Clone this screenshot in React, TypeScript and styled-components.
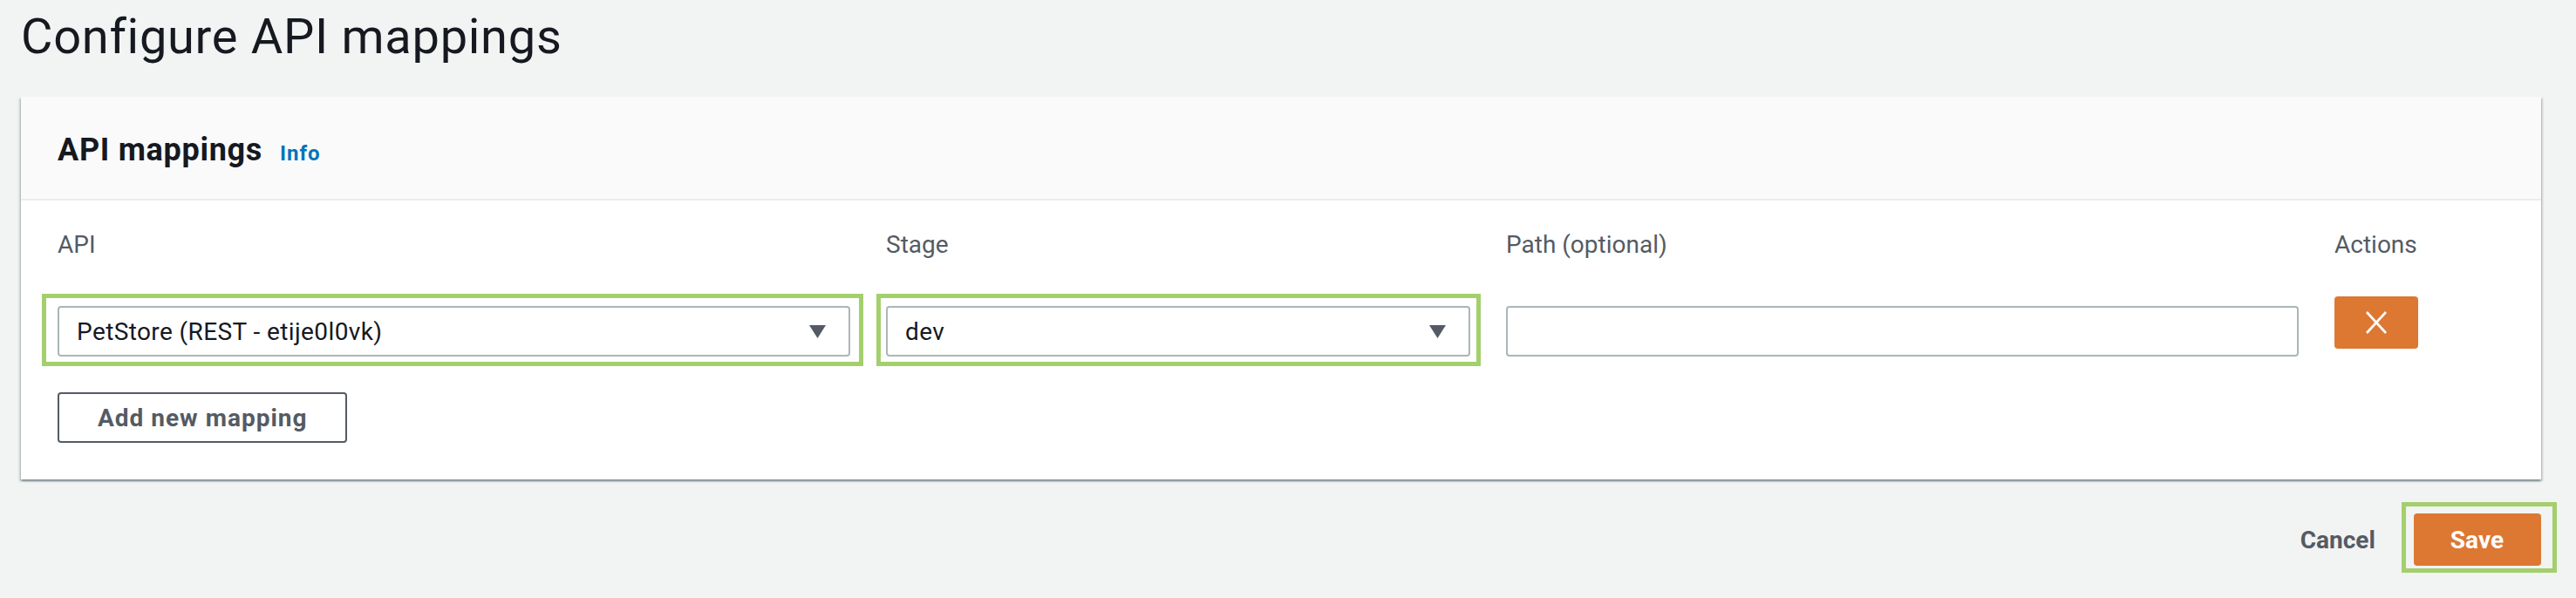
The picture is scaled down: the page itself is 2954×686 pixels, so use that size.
import { FC, ReactNode } from "react"
import styled, { createGlobalStyle } from "styled-components"

const GlobalStyle = createGlobalStyle`
  body {
    margin: 0;
    background: #f2f3f3;
    font-family: Roboto, "Liberation Sans", sans-serif;
    color: #16191f;
  }
  * {
    box-sizing: border-box;
  }
`

const StyledPage = styled.div`
  min-height: 686px;
  padding: 9px 40px 0 24px;
`

const StyledTitle = styled.h1`
  margin: 0 0 35px;
  font-size: 56px;
  line-height: 67px;
  font-weight: 400;
  letter-spacing: 0.7px;
  color: #16191f;
`

const StyledPanel = styled.section`
  background: #fff;
  box-shadow: 0 2px 2px 0 rgba(0, 28, 36, 0.3), 2px 2px 2px 0 rgba(0, 28, 36, 0.15),
    -2px 2px 2px 0 rgba(0, 28, 36, 0.15);
`

const StyledPanelHeader = styled.header`
  display: flex;
  align-items: baseline;
  gap: 20px;
  padding: 39px 42px 34px;
  background: #fafafa;
  border-bottom: 2px solid #eaeded;
`

const StyledHeading = styled.h2`
  margin: 0;
  font-size: 36px;
  line-height: 44px;
  font-weight: 700;
  letter-spacing: 0.7px;
`

const StyledInfo = styled.a`
  font-size: 24px;
  font-weight: 700;
  letter-spacing: 1px;
  color: #0073bb;
  text-decoration: none;
`

const StyledPanelBody = styled.div`
  padding: 31px 42px 42px;
`

const StyledGrid = styled.div`
  display: grid;
  grid-template-columns: 909px 670px 909px 96px;
  column-gap: 41px;
  row-gap: 39px;
  align-items: start;
`

const StyledLabel = styled.div`
  font-size: 28px;
  line-height: 40px;
  color: #545b64;
`

const StyledHighlight = styled.div<{ $inset: string }>`
  position: relative;

  &::after {
    content: "";
    position: absolute;
    inset: ${(p) => p.$inset};
    border: 5px solid #a3cf6d;
    pointer-events: none;
  }
`

const StyledSelect = styled.div`
  display: flex;
  align-items: center;
  justify-content: space-between;
  height: 58px;
  margin-top: 11px;
  padding: 0 26px 0 20px;
  font-size: 28px;
  letter-spacing: 0.4px;
  color: #16191f;
  background: #fff;
  border: 2px solid #aab7b8;
  border-radius: 4px;
`

const StyledInput = styled.input`
  display: block;
  width: 100%;
  height: 58px;
  margin-top: 11px;
  padding: 0 20px;
  font-family: inherit;
  font-size: 28px;
  background: #fff;
  border: 2px solid #aab7b8;
  border-radius: 4px;
`

const StyledRemove = styled.button`
  display: flex;
  align-items: center;
  justify-content: center;
  width: 96px;
  height: 60px;
  padding: 0;
  background: #dd7833;
  border: none;
  border-radius: 4px;
  cursor: pointer;
`

const StyledAddButton = styled.button`
  height: 58px;
  margin-top: 41px;
  padding: 0 44px;
  font-family: inherit;
  font-size: 28px;
  font-weight: 700;
  letter-spacing: 1px;
  color: #545b64;
  background: #fff;
  border: 2px solid #545b64;
  border-radius: 4px;
  cursor: pointer;
`

const StyledFooter = styled.footer`
  display: flex;
  justify-content: flex-end;
  align-items: center;
  gap: 44px;
  padding-top: 39px;
`

const StyledCancel = styled.button`
  padding: 0;
  font-family: inherit;
  font-size: 28px;
  font-weight: 700;
  color: #545b64;
  background: transparent;
  border: none;
  cursor: pointer;
`

const StyledSave = styled.button`
  height: 60px;
  padding: 0 43px 0 42px;
  font-family: inherit;
  font-size: 28px;
  font-weight: 700;
  color: #fff;
  background: #dd7833;
  border: none;
  border-radius: 4px;
  cursor: pointer;
`

const Caret: FC = () => (
  <svg width='19' height='15' viewBox='0 0 19 15'>
    <polygon points='0,0 19,0 9.5,15' fill='#545b64' />
  </svg>
)

const Select: FC<{ children: ReactNode }> = ({ children }) => (
  <StyledSelect>
    <span>{children}</span>
    <Caret />
  </StyledSelect>
)

const App: FC = () => (
  <>
    <GlobalStyle />
    <StyledPage>
      <StyledTitle>Configure API mappings</StyledTitle>
      <StyledPanel>
        <StyledPanelHeader>
          <StyledHeading>API mappings</StyledHeading>
          <StyledInfo href='#'>Info</StyledInfo>
        </StyledPanelHeader>
        <StyledPanelBody>
          <StyledGrid>
            <StyledLabel>API</StyledLabel>
            <StyledLabel>Stage</StyledLabel>
            <StyledLabel>Path (optional)</StyledLabel>
            <StyledLabel>Actions</StyledLabel>

            <StyledHighlight $inset='-3px -15px -11px -18px'>
              <Select>PetStore (REST - etije0l0vk)</Select>
            </StyledHighlight>
            <StyledHighlight $inset='-3px -12px -11px -11px'>
              <Select>dev</Select>
            </StyledHighlight>
            <StyledInput type='text' />
            <StyledRemove type='button' aria-label='Remove'>
              <svg width='30' height='26' viewBox='0 0 30 26'>
                <path
                  d='M4 1 L26 25 M26 1 L4 25'
                  stroke='#fff'
                  strokeWidth='2.6'
                  fill='none'
                />
              </svg>
            </StyledRemove>
          </StyledGrid>
          <StyledAddButton type='button'>Add new mapping</StyledAddButton>
        </StyledPanelBody>
      </StyledPanel>
      <StyledFooter>
        <StyledCancel type='button'>Cancel</StyledCancel>
        <StyledHighlight $inset='-13px -18px -8px -14px'>
          <StyledSave type='button'>Save</StyledSave>
        </StyledHighlight>
      </StyledFooter>
    </StyledPage>
  </>
)

export default App
